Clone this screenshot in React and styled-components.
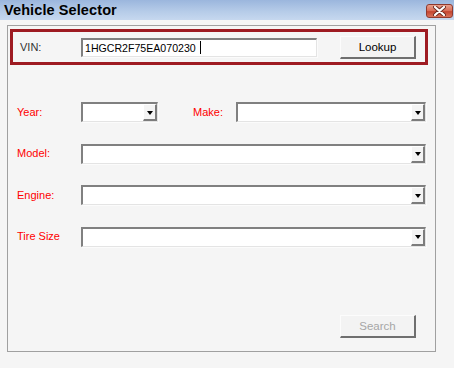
import React from "react";
import styled, { createGlobalStyle } from "styled-components";

const Global = createGlobalStyle`
  html, body { margin: 0; padding: 0; }
  body {
    width: 454px; height: 368px; overflow: hidden;
    background: #f5f5f5;
    font-family: "Liberation Sans", Arial, sans-serif;
    font-size: 11px;
  }
`;

const Window = styled.div`
  width: 454px;
  height: 368px;
  display: flex;
  flex-direction: column;
  background: #f5f5f5;
`;

const TitleBar = styled.div`
  height: 20px;
  flex: 0 0 20px;
  display: flex;
  align-items: center;
  justify-content: space-between;
  padding: 0 1px 0 4px;
  background: linear-gradient(#9bb6dd, #b5cbe8 55%, #c6d8ef);
  box-sizing: border-box;
`;

const Title = styled.div`
  font-weight: bold;
  font-size: 14.5px;
  color: #000;
  letter-spacing: 0.1px;
  line-height: 20px;
`;

const CloseBtn = styled.div`
  width: 27px;
  height: 14px;
  margin-top: 1px;
  border-radius: 3px;
  border: 1px solid #8f3a2f;
  box-sizing: border-box;
  background: linear-gradient(#e8a08c, #d86a55 50%, #c4442f 55%, #d8735c);
  display: flex;
  align-items: center;
  justify-content: center;
`;

const Panel = styled.div`
  margin: 5px 0 0 7px;
  width: 429px;
  height: 327px;
  box-sizing: border-box;
  border: 1px solid #a0a0a0;
  display: flex;
  flex-direction: column;
  padding: 3px 0 0 2px;
`;

const VinBox = styled.div`
  width: 418px;
  height: 36px;
  box-sizing: border-box;
  border: 3px solid #9e1b22;
  display: flex;
  align-items: center;
  padding-left: 7px;
`;

const Label = styled.div`
  color: ${(p) => p.$color || "#ff0000"};
  width: ${(p) => p.$w || 64}px;
  flex: 0 0 ${(p) => p.$w || 64}px;
  font-size: 11px;
  line-height: 13px;
`;

const Sunken = styled.div`
  box-sizing: border-box;
  width: ${(p) => p.$w}px;
  height: ${(p) => p.$h || 20}px;
  background: #fff;
  border-top: 2px solid #808080;
  border-left: 2px solid #808080;
  border-bottom: 1px solid #e4e4e4;
  border-right: 1px solid #e4e4e4;
  display: flex;
  align-items: center;
  justify-content: space-between;
  box-shadow: 1px 1px 0 #fbfbfb;
`;

const InputText = styled.span`
  font-size: 10.6px;
  color: #000;
  padding-left: 2px;
  display: flex;
  align-items: center;
  gap: 4px;
`;

const Caret = styled.span`
  display: inline-block;
  width: 1px;
  height: 13px;
  background: #000;
`;

const DropBtn = styled.div`
  box-sizing: border-box;
  width: 14px;
  height: 17px;
  background: #f4f4f4;
  border-top: 1px solid #fff;
  border-left: 1px solid #fff;
  border-right: 2px solid #7c7c7c;
  border-bottom: 2px solid #7c7c7c;
  display: flex;
  align-items: center;
  justify-content: center;
`;

const Arrow = styled.span`
  width: 0;
  height: 0;
  border-left: 3.5px solid transparent;
  border-right: 3.5px solid transparent;
  border-top: 4px solid #000;
  margin-top: 1px;
`;

const Button = styled.div`
  box-sizing: border-box;
  width: 76px;
  height: 23px;
  background: #f3f3f3;
  border-top: 1px solid #fcfcfc;
  border-left: 1px solid #fcfcfc;
  border-right: 2px solid #6f6f6f;
  border-bottom: 2px solid #6f6f6f;
  display: flex;
  align-items: center;
  justify-content: center;
  font-size: 11.5px;
  color: ${(p) => (p.$disabled ? "#a6a6a6" : "#000")};
`;

const VinGap = styled.div`
  width: 23px;
`;

const Form = styled.div`
  display: flex;
  flex-direction: column;
  gap: 21.6px;
  padding: 37px 0 0 7px;
`;

const Row = styled.div`
  display: flex;
  align-items: center;
  height: 20px;
`;

const Spacer = styled.div`
  width: ${(p) => p.$w}px;
  flex: 0 0 ${(p) => p.$w}px;
`;

const Footer = styled.div`
  display: flex;
  justify-content: flex-end;
  padding: 68px 19px 0 0;
`;

function Combo({ w }) {
  return (
    <Sunken $w={w} $h={20}>
      <span />
      <DropBtn>
        <Arrow />
      </DropBtn>
    </Sunken>
  );
}

export default function App() {
  return (
    <>
      <Global />
      <Window>
        <TitleBar>
          <Title>Vehicle Selector</Title>
          <CloseBtn>
            <svg width="13" height="10" viewBox="0 0 13 10">
              <path
                d="M2 1 L11 9 M11 1 L2 9"
                stroke="#6a2a22"
                strokeWidth="4"
                strokeLinecap="round"
              />
              <path
                d="M2 1 L11 9 M11 1 L2 9"
                stroke="#fff"
                strokeWidth="2.2"
                strokeLinecap="round"
              />
            </svg>
          </CloseBtn>
        </TitleBar>
        <Panel>
          <VinBox>
            <Label $color="#333" $w={61}>VIN:</Label>
            <Sunken $w={236} $h={19}>
              <InputText>
                1HGCR2F75EA070230 <Caret />
              </InputText>
            </Sunken>
            <VinGap />
            <Button>Lookup</Button>
          </VinBox>
          <Form>
            <Row>
              <Label>Year:</Label>
              <Combo w={77} />
              <Spacer $w={35} />
              <Label $w={43}>Make:</Label>
              <Combo w={190} />
            </Row>
            <Row>
              <Label>Model:</Label>
              <Combo w={345} />
            </Row>
            <Row>
              <Label>Engine:</Label>
              <Combo w={345} />
            </Row>
            <Row>
              <Label>Tire Size</Label>
              <Combo w={345} />
            </Row>
          </Form>
          <Footer>
            <Button $disabled>Search</Button>
          </Footer>
        </Panel>
      </Window>
    </>
  );
}
